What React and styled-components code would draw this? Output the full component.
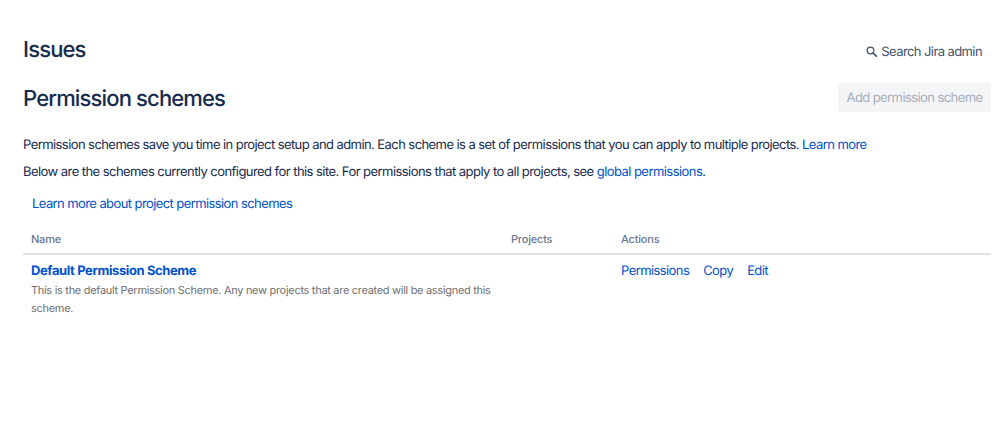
import React from 'react';
import styled, { createGlobalStyle } from 'styled-components';

const GlobalStyle = createGlobalStyle`
  * {
    box-sizing: border-box;
  }

  body {
    margin: 0;
    background: #fff;
    color: #172b4d;
    font-family: Inter, 'Liberation Sans', sans-serif;
    font-size: 13px;
    letter-spacing: -0.59px;
    text-rendering: geometricPrecision;
    -webkit-font-smoothing: antialiased;
  }
`

const Page = styled.main`
  min-height: 423px;
  padding: 35px 8px 0 23px;
`

const Header = styled.header`
  display: flex;
  justify-content: space-between;
  height: ${props => props.$height};
`

const Title = styled.h1`
  margin: 0;
  font-size: 22px;
  font-weight: 500;
  line-height: 30px;
  letter-spacing: -0.85px;
`

const SearchButton = styled.button`
  display: flex;
  align-items: center;
  gap: 3px;
  height: 30px;
  margin-top: 2px;
  padding: 0 9px;
  border: 0;
  background: none;
  color: #42526e;
  font: inherit;
  letter-spacing: inherit;
  text-rendering: inherit;
`

const AddButton = styled.button`
  width: 153px;
  height: 29px;
  margin-top: -1px;
  padding: 0;
  border: 0;
  border-radius: 3px;
  background: #f4f5f7;
  color: #a5adba;
  font: inherit;
  letter-spacing: inherit;
  text-rendering: inherit;
`

const Text = styled.p`
  margin: 0 0 8px;
  line-height: 19px;
  letter-spacing: ${props => props.$spacing};
  white-space: nowrap;
`

const Link = styled.a`
  color: #0052cc;
  font-weight: ${props => props.$bold ? 700 : 400};
  letter-spacing: ${props => props.$bold ? '-0.39px' : 'inherit'};
  text-decoration: none;
`

const HelpRow = styled.div`
  margin-top: 13px;
  padding-left: 9px;
  line-height: 19px;
`

const Table = styled.table`
  width: 968px;
  margin-top: 16px;
  border-collapse: collapse;
  table-layout: fixed;
`

const HeadCell = styled.th`
  width: ${props => props.$width};
  height: 24px;
  padding: 0 8px 4px;
  border-bottom: 2px solid #dfe1e6;
  color: #6b778c;
  font-size: 11px;
  font-weight: 500;
  line-height: 17px;
  letter-spacing: -0.2px;
  text-align: left;
`

const Cell = styled.td`
  padding: 7px 8px 0;
  line-height: 19px;
  vertical-align: top;
`

const Description = styled.div`
  color: #707070;
  font-size: 11px;
  line-height: 18px;
  letter-spacing: -0.3px;
`

const Actions = styled.div`
  display: flex;
  gap: 14px;
`

const SearchIcon = () => (
  <svg width="12" height="12" viewBox="0 0 12 12" fill="none" stroke="currentColor">
    <circle cx="4.5" cy="4.5" r="3.4" strokeWidth="1.2" />
    <path d="M7.1 7.1 10.4 10.2" strokeWidth="1.7" strokeLinecap="round" />
  </svg>
)

const schemes = [
  {
    name: 'Default Permission Scheme',
    description: 'This is the default Permission Scheme. Any new projects that are created will be assigned this scheme.',
    actions: ['Permissions', 'Copy', 'Edit'],
  },
]

const App = () => {
  return (
    <Page>
      <GlobalStyle />
      <Header $height="49px">
        <Title>Issues</Title>
        <SearchButton><SearchIcon /><span>Search Jira admin</span></SearchButton>
      </Header>
      <Header $height="52px">
        <Title as="h2">Permission schemes</Title>
        <AddButton disabled>Add permission scheme</AddButton>
      </Header>
      <Text $spacing="-0.575px">
        Permission schemes save you time in project setup and admin. Each scheme is a set of permissions that you can apply to multiple projects. <Link>Learn more</Link>
      </Text>
      <Text $spacing="-0.555px">
        Below are the schemes currently configured for this site. For permissions that apply to all projects, see <Link>global permissions</Link>.
      </Text>
      <HelpRow><Link>Learn more about project permission schemes</Link></HelpRow>
      <Table>
        <thead>
          <tr>
            <HeadCell $width="480px">Name</HeadCell>
            <HeadCell $width="110px">Projects</HeadCell>
            <HeadCell>Actions</HeadCell>
          </tr>
        </thead>
        <tbody>
          {schemes.map(scheme => (
            <tr key={scheme.name}>
              <Cell>
                <Link $bold>{scheme.name}</Link>
                <Description>{scheme.description}</Description>
              </Cell>
              <Cell />
              <Cell>
                <Actions>
                  {scheme.actions.map(action => <Link key={action}>{action}</Link>)}
                </Actions>
              </Cell>
            </tr>
          ))}
        </tbody>
      </Table>
    </Page>
  );
}

export default App;
